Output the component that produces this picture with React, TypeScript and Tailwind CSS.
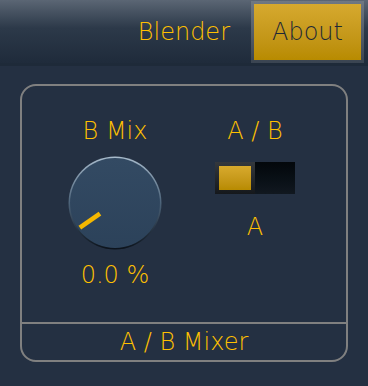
const font = { fontFamily: '"DejaVu Sans", "Liberation Sans", sans-serif' };

function Knob({ value }: { value: number }) {
  // 0 = lower-left, 1 = lower-right
  const angle = 215 - value * 250;
  const rad = (angle * Math.PI) / 180;
  const cx = 46;
  const cy = 46;
  const x1 = cx + Math.cos(rad) * 18;
  const y1 = cy - Math.sin(rad) * 18;
  const x2 = cx + Math.cos(rad) * 42;
  const y2 = cy - Math.sin(rad) * 42;
  return (
    <svg width="94" height="94" viewBox="0 0 92 92">
      <defs>
        <linearGradient id="rim" x1="0" y1="0" x2="0" y2="1">
          <stop offset="0" stopColor="#a9bccd" />
          <stop offset="0.5" stopColor="#4c6379" />
          <stop offset="1" stopColor="#0b121b" />
        </linearGradient>
        <linearGradient id="face" x1="0" y1="0" x2="0" y2="1">
          <stop offset="0" stopColor="#334a63" />
          <stop offset="1" stopColor="#2c425a" />
        </linearGradient>
      </defs>
      <circle cx={cx} cy={cy} r="45.5" fill="url(#rim)" />
      <circle cx={cx} cy={cy} r="44" fill="url(#face)" />
      <line x1={x1} y1={y1} x2={x2} y2={y2} stroke="#f5b800" strokeWidth="4.5" />
    </svg>
  );
}

export default function App() {
  return (
    <div className="h-[386px] w-[368px] overflow-hidden bg-[#243042] text-[24px] font-extralight leading-[28px] text-[#ffc000]" style={font}>
      <header className="flex h-[63px] items-center justify-end bg-gradient-to-b from-[#5b6674] via-[#2c3949] via-45% to-[#1f2b3b] pr-[4px]">
        <span className="mr-[21px] mt-[1px]">Blender</span>
        <div className="bg-gradient-to-b from-[#6f7883] to-[#3a4451] p-[3px]">
          <div className="flex h-[56px] w-[107px] items-center justify-center bg-gradient-to-b from-[#d6a92e] to-[#b88b00] text-[#1d2836]">
            About
          </div>
        </div>
      </header>
      <div className="h-[3px] bg-[#1e2a39]" />

      <div className="mx-[20px] mt-[18px] flex h-[278px] flex-col rounded-[16px] border-2 border-[#808080]">
        <div className="flex flex-1 pt-[31px]">
          <div className="ml-[27px] flex w-[132px] flex-col items-center">
            <span>B Mix</span>
            <div className="mt-[11px]">
              <Knob value={0} />
            </div>
            <span className="mt-[11px]">0.0 %</span>
          </div>
          <div className="ml-[24px] flex w-[100px] flex-col items-center">
            <span>A / B</span>
            <div className="mt-[17px] flex h-[32px] w-[80px]">
              <div className="flex w-[40px] items-center bg-gradient-to-b from-[#34383d] to-[#15181c] pl-[4px]">
                <div className="h-[24px] w-[32px] bg-gradient-to-b from-[#d8aa2c] to-[#b88b00]" />
              </div>
              <div className="w-[40px] bg-gradient-to-b from-[#03070b] to-[#111820]" />
            </div>
            <span className="mt-[19px]">A</span>
          </div>
        </div>
        <div className="flex h-[38px] items-center justify-center border-t-2 border-[#808080]">
          A / B Mixer
        </div>
      </div>
    </div>
  );
}
